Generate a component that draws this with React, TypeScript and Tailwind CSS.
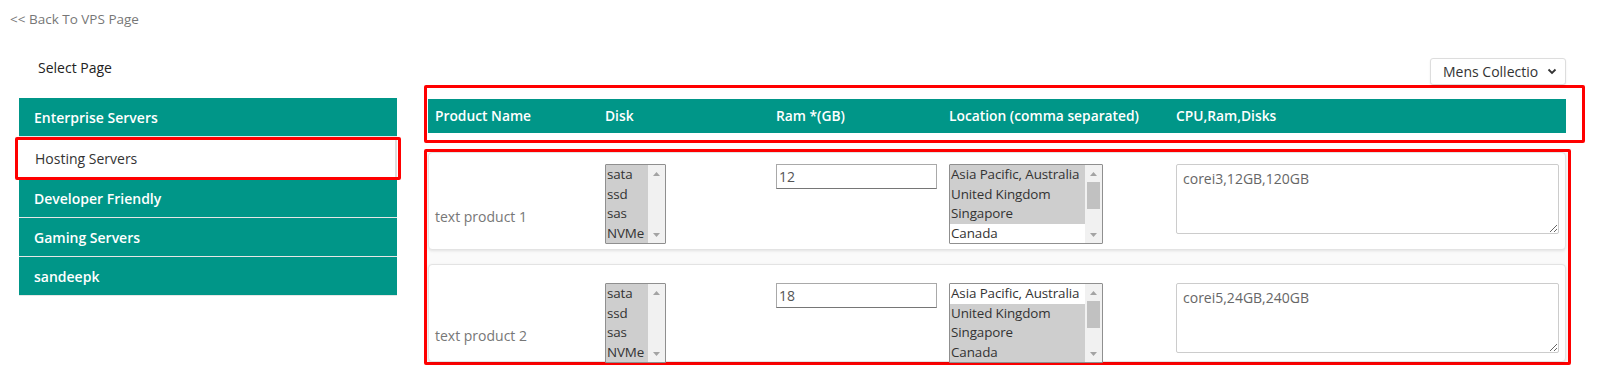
import { ReactNode } from "react";

type Option = { label: string; selected: boolean };

type Product = {
  name: string;
  ram: string;
  disks: Option[];
  locations: Option[];
  specs: string;
};

const products: Product[] = [
  {
    name: "text product 1",
    ram: "12",
    disks: [
      { label: "sata", selected: true },
      { label: "ssd", selected: true },
      { label: "sas", selected: true },
      { label: "NVMe", selected: true },
    ],
    locations: [
      { label: "Asia Pacific, Australia", selected: true },
      { label: "United Kingdom", selected: true },
      { label: "Singapore", selected: true },
      { label: "Canada", selected: false },
    ],
    specs: "corei3,12GB,120GB",
  },
  {
    name: "text product 2",
    ram: "18",
    disks: [
      { label: "sata", selected: true },
      { label: "ssd", selected: true },
      { label: "sas", selected: true },
      { label: "NVMe", selected: true },
    ],
    locations: [
      { label: "Asia Pacific, Australia", selected: false },
      { label: "United Kingdom", selected: true },
      { label: "Singapore", selected: true },
      { label: "Canada", selected: true },
    ],
    specs: "corei5,24GB,240GB",
  },
];

const pages = ["Enterprise Servers", "Hosting Servers", "Developer Friendly", "Gaming Servers", "sandeepk"];

function Arrow({ up }: { up?: boolean }) {
  return (
    <svg width="7" height="4" viewBox="0 0 7 4" className="fill-[#a3a3a3]">
      {up ? <polygon points="0,4 7,4 3.5,0" /> : <polygon points="0,0 7,0 3.5,4" />}
    </svg>
  );
}

function ListBox({ options, width, thumb }: { options: Option[]; width: string; thumb?: boolean }) {
  return (
    <div className={`${width} h-[80px] flex border border-[#8f8f8f] bg-white rounded-[1px] overflow-hidden`}>
      <div className="flex-1 min-w-0 overflow-hidden">
        {options.map((o) => (
          <div
            key={o.label}
            className={`h-[19.5px] leading-[19.5px] pl-[1px] whitespace-nowrap text-[13.4px] tracking-[-0.1px] text-[#333] ${
              o.selected ? "bg-[#cecece]" : "bg-white"
            }`}
          >
            {o.label}
          </div>
        ))}
      </div>
      <div className="w-[17px] bg-[#f1f1f1] flex flex-col items-center">
        <div className="h-[17px] flex items-center justify-center">
          <Arrow up />
        </div>
        <div className="flex-1 w-full px-[2px]">
          {thumb && <div className="w-full h-[27px] bg-[#c1c1c1]" />}
        </div>
        <div className="h-[17px] flex items-center justify-center">
          <Arrow />
        </div>
      </div>
    </div>
  );
}

function RedBox({ children, className }: { children: ReactNode; className: string }) {
  return <div className={`border-[3px] border-[#ff0000] rounded-[2px] ${className}`}>{children}</div>;
}

const cols = "grid grid-cols-[170px_171px_173px_227px_1fr]";

export default function App() {
  return (
    <div className="min-h-[374px] bg-white font-['Open_Sans',sans-serif] text-[14px] text-[#333]">
      <div className="pt-[10px] pl-[10px] text-[13.5px] leading-[18px] text-[#777]">&lt;&lt; Back To VPS Page</div>

      <div className="flex">
        <div className="ml-[19px] w-[378px] pt-[30px]">
          <div className="pl-[19px] h-[20px] leading-[20px] text-[14px] font-medium text-[#222] mb-[20px]">
            Select Page
          </div>
          <div className="flex flex-col">
            {pages.map((p) =>
              p === "Hosting Servers" ? (
                <RedBox key={p} className="-mx-[4px] px-[1px]">
                  <div className="h-[37px] bg-white border-r-[2px] border-[#ddd] flex items-center pl-[16px] text-[14px] text-[#333]">
                    {p}
                  </div>
                </RedBox>
              ) : (
                <div
                  key={p}
                  className={`${
                    p === "Developer Friendly" ? "h-[38px]" : "h-[39px]"
                  } bg-[#009688] border-b border-[#e6e6e6] flex items-center pl-[15px] text-[14px] font-semibold text-white`}
                >
                  {p}
                </div>
              )
            )}
          </div>
        </div>

        <div className="ml-[27px] w-[1161px]">
          <div className="pt-[30px] pr-[19px] flex justify-end">
            <div className="w-[136px] h-[27px] border border-[#ddd] rounded-[3px] shadow-[0_1px_2px_rgba(0,0,0,0.08)] bg-white flex items-center pl-[12px] pr-[8px] justify-between">
              <span className="text-[14px] text-[#333] whitespace-nowrap">Mens Collectio</span>
              <svg width="10" height="7" viewBox="0 0 10 7" className="stroke-[#333]" fill="none">
                <polyline points="1.5,1.5 5,5 8.5,1.5" strokeWidth="1.8" />
              </svg>
            </div>
          </div>

          <RedBox className="pt-[11px] pb-[7px] pl-[1px] pr-[16px]">
            <div className={`${cols} h-[34px] bg-[#009688] pl-[7px] items-center text-[13.8px] font-semibold text-white`}>
              <div>Product Name</div>
              <div>Disk</div>
              <div>Ram *(GB)</div>
              <div>Location (comma separated)</div>
              <div>CPU,Ram,Disks</div>
            </div>
          </RedBox>

          <RedBox className="mt-[6px] w-[1147px] pl-[1px] pr-[2px] bg-[#fafafa] flex flex-col gap-[14px]">
            {products.map((p, i) => (
              <div
                key={p.name}
                className={`${cols} ${
                  i === 0 ? "pt-[11px]" : "pt-[18px]"
                } h-[98px] bg-white border border-[#e3e3e3] rounded-[4px] shadow-[0_1px_3px_rgba(0,0,0,0.1)] pl-[6px] pr-[6px]`}
              >
                <div className="pt-[43px] leading-[20px] text-[14px] text-[#777]">{p.name}</div>
                <div>
                  <ListBox options={p.disks} width="w-[61px]" />
                </div>
                <div>
                  <input
                    readOnly
                    value={p.ram}
                    className="w-[161px] h-[25px] border border-[#a9a9a9] border-b-[#767676] px-[2px] text-[14px] text-[#555] outline-none"
                  />
                </div>
                <div>
                  <ListBox options={p.locations} width="w-[154px]" thumb />
                </div>
                <div>
                  <textarea
                    readOnly
                    value={p.specs}
                    className="block w-full h-[70px] border border-[#ccc] rounded-[2px] px-[6px] py-[3px] text-[14px] text-[#666] outline-none"
                  />
                </div>
              </div>
            ))}
          </RedBox>
        </div>
      </div>
    </div>
  );
}
